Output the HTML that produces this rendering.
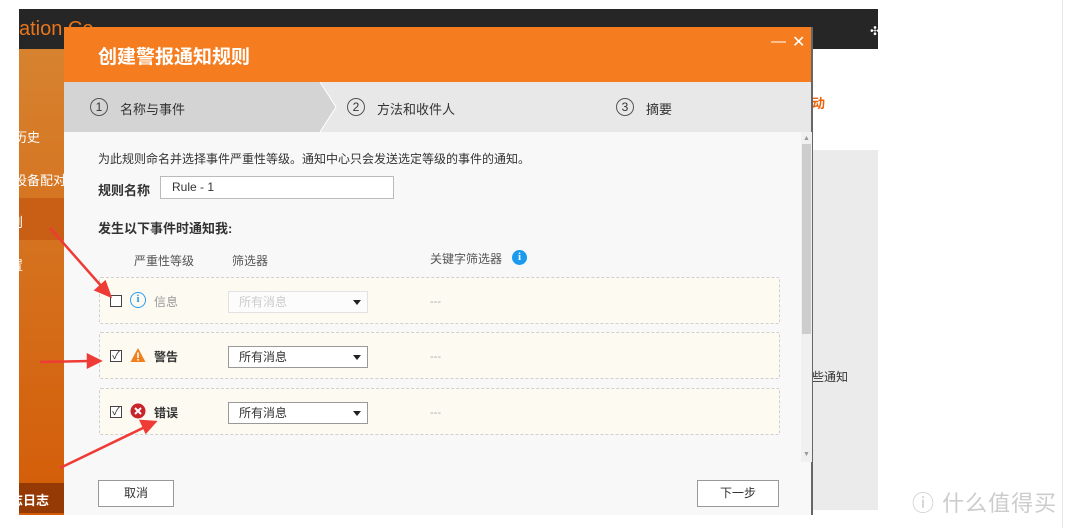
<!DOCTYPE html>
<html><head><meta charset="utf-8"><style>
*{margin:0;padding:0;box-sizing:border-box}
body{width:1080px;height:528px;background:#fff;position:relative;overflow:hidden;font-family:"Liberation Sans","Noto Sans CJK SC",sans-serif;font-size:12px;color:#333}
.a{position:absolute}
.row{position:absolute;left:99px;width:681px;height:47px;border:1px dashed #d0d0d0;background:#fdfaf1;border-radius:2px}
.cb{position:absolute;left:10px;top:17px;width:12px;height:12px;border:1px solid #444;background:#fff;font-size:11px;line-height:10px;text-align:center}
.sel{position:absolute;left:128px;top:13px;width:140px;height:22px;border:1px solid #999;background:#fff;padding-left:10px;line-height:20px;font-size:12px}
.sel:after{content:"";position:absolute;right:6px;top:8px;border:4px solid transparent;border-top:5px solid #222}
.dash{position:absolute;left:330px;top:18px;color:#aaa;font-size:11px}
.lbl{position:absolute;left:54px;top:15px;font-size:12px}
.ic{position:absolute;left:30px;top:14px;width:16px;height:16px}
</style></head><body>
<div class="a" style="left:19px;top:9px;width:859px;height:40px;background:#262626"></div>
<div class="a" style="left:19px;top:18px;color:#e8761c;font-size:20px">ation Ce</div>
<div class="a" style="left:870px;top:24px;color:#fff;font-size:12px">✣</div>
<div class="a" style="left:19px;top:49px;width:45px;height:466px;background:linear-gradient(#d6822f,#d45c08)"></div>
<div class="a" style="left:19px;top:198px;width:45px;height:42px;background:#c85f14"></div>
<div class="a" style="left:19px;top:483px;width:45px;height:30px;background:#963a05"></div>
<div class="a" style="left:14px;top:127px;color:#fff;font-size:13px">历史</div>
<div class="a" style="left:14px;top:170px;color:#fff;font-size:13px">设备配对</div>
<div class="a" style="left:10px;top:212px;color:#fff;font-size:13px">则</div>
<div class="a" style="left:10px;top:255px;color:#fff;font-size:13px">置</div>
<div class="a" style="left:10px;top:490px;color:#fff;font-size:13px;font-weight:bold">志日志</div>
<div class="a" style="left:813px;top:49px;width:65px;height:101px;background:#fff"></div>
<div class="a" style="left:813px;top:150px;width:65px;height:360px;background:#ebebeb"></div>
<div class="a" style="left:812px;top:93px;color:#e8620c;font-size:13px;font-weight:bold">动</div>
<div class="a" style="left:812px;top:368px;font-size:12px">些通知</div>
<div class="a" style="left:1062px;top:0;width:1px;height:528px;background:#e6e6e6"></div>
<div class="a" style="left:912px;top:486px;color:#ccc;font-size:22px;letter-spacing:1px">ⓘ 什么值得买</div>
<!-- dialog -->
<div class="a" style="left:64px;top:27px;width:749px;height:488px;background:#f8f8f8;border-right:2px solid #666">
 <div class="a" style="left:0;top:0;width:747px;height:55px;background:#f57d1f"></div>
 <div class="a" style="left:34px;top:15px;color:#fff;font-size:19px;font-weight:bold">创建警报通知规则</div>
 <div class="a" style="left:707px;top:6px;color:#fff;font-size:15px">—</div>
 <div class="a" style="left:728px;top:5px;color:#fff;font-size:16px">✕</div>
 <div class="a" style="left:0;top:55px;width:747px;height:50px;background:#e8e8e8"></div>
 <svg class="a" style="left:0;top:55px" width="300" height="50"><polygon points="0,0 256,0 272,25 256,50 0,50" fill="#d4d4d4"/><polyline points="256,0 272,25 256,50" fill="none" stroke="#fff" stroke-width="1"/></svg>
 <div class="a" style="left:26px;top:71px;width:18px;height:18px;border:1px solid #555;border-radius:50%;text-align:center;line-height:16px;font-size:12px">1</div>
 <div class="a" style="left:56px;top:72px;font-size:13px">名称与事件</div>
 <div class="a" style="left:283px;top:71px;width:18px;height:18px;border:1px solid #555;border-radius:50%;text-align:center;line-height:16px;font-size:12px">2</div>
 <div class="a" style="left:313px;top:72px;font-size:13px">方法和收件人</div>
 <div class="a" style="left:552px;top:71px;width:18px;height:18px;border:1px solid #555;border-radius:50%;text-align:center;line-height:16px;font-size:12px">3</div>
 <div class="a" style="left:582px;top:72px;font-size:13px">摘要</div>
 <div class="a" style="left:737px;top:105px;width:11px;height:330px;background:#f0f0f0"></div>
 <div class="a" style="left:738px;top:117px;width:9px;height:190px;background:#cdcdcd"></div>
 <div class="a" style="left:739px;top:108px;font-size:7px;color:#999">▲</div>
 <div class="a" style="left:739px;top:424px;font-size:7px;color:#999">▼</div>
</div>
<div class="a" style="left:98px;top:150px;font-size:12px">为此规则命名并选择事件严重性等级。通知中心只会发送选定等级的事件的通知。</div>
<div class="a" style="left:98px;top:180px;font-size:13px;font-weight:bold">规则名称</div>
<div class="a" style="left:160px;top:176px;width:234px;height:23px;border:1px solid #bbb;background:#fff;padding-left:11px;line-height:21px;font-size:12px">Rule - 1</div>
<div class="a" style="left:98px;top:218px;font-size:13px;font-weight:bold">发生以下事件时通知我:</div>
<div class="a" style="left:134px;top:252px;color:#555">严重性等级</div>
<div class="a" style="left:232px;top:252px;color:#555">筛选器</div>
<div class="a" style="left:430px;top:250px;color:#555">关键字筛选器</div>
<div class="a" style="left:512px;top:250px;width:15px;height:15px;border-radius:50%;background:#1a9bef;color:#fff;font-weight:bold;font-size:11px;text-align:center;line-height:15px;font-family:'Liberation Serif',serif">i</div>
<div class="row" style="top:277px">
 <div class="cb"></div>
 <div class="ic" style="border:1.5px solid #2a9cf0;border-radius:50%;color:#2a9cf0;font-size:11px;text-align:center;line-height:13px;font-family:'Liberation Serif',serif;font-weight:bold">i</div>
 <div class="lbl" style="color:#999">信息</div>
 <div class="sel" style="border-color:#e2e2e2;color:#ccc;background:#fcfcfc">所有消息</div>
 <div class="dash">---</div>
</div>
<div class="row" style="top:332px">
 <div class="cb">✓</div>
 <svg class="ic" viewBox="0 0 16 16"><polygon points="8,1 15.5,15 0.5,15" fill="#f07f1e"/><rect x="7.2" y="5.5" width="1.6" height="5.5" fill="#fff"/><rect x="7.2" y="12" width="1.6" height="1.6" fill="#fff"/></svg>
 <div class="lbl" style="font-weight:bold">警告</div>
 <div class="sel">所有消息</div>
 <div class="dash">---</div>
</div>
<div class="row" style="top:388px">
 <div class="cb">✓</div>
 <svg class="ic" viewBox="0 0 16 16"><circle cx="8" cy="8" r="7.5" fill="#c8242b"/><path d="M5 5L11 11M11 5L5 11" stroke="#fff" stroke-width="2"/></svg>
 <div class="lbl" style="font-weight:bold">错误</div>
 <div class="sel">所有消息</div>
 <div class="dash">---</div>
</div>
<div class="a" style="left:98px;top:480px;width:76px;height:27px;border:1px solid #999;background:#fff;text-align:center;line-height:25px">取消</div>
<div class="a" style="left:697px;top:480px;width:82px;height:27px;border:1px solid #999;background:#fff;text-align:center;line-height:25px">下一步</div>
<!-- arrows -->
<svg class="a" style="left:0;top:0" width="1080" height="528">
<g stroke="#ef3b36" stroke-width="2.5" fill="#ef3b36">
<line x1="50" y1="228" x2="103" y2="288"/><polygon points="110,296 96,290 105,282"/>
<line x1="40" y1="362" x2="90" y2="361"/><polygon points="100,361 88,355 88,367"/>
<line x1="60" y1="468" x2="145" y2="427"/><polygon points="155,422 141,421 146,432"/>
</g></svg>
</body></html>
